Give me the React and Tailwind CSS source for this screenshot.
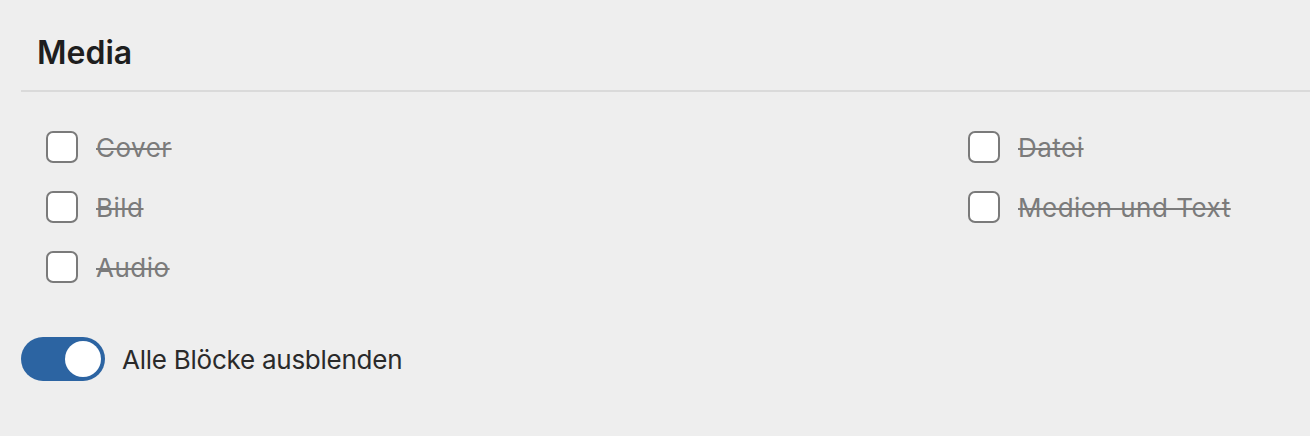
import React from "react";

const leftItems = ["Cover", "Bild", "Audio"];
const rightItems = ["Datei", "Medien und Text"];

const BlockCheckbox = ({ label }) => (
  <label className="flex items-center h-[60px]">
    <span className="w-[32px] h-[32px] rounded-[7px] border-2 border-[#7a7a7a] bg-white shrink-0" />
    <span className="ml-[18px] text-[26px] tracking-[0.5px] text-[#7b7b7b] line-through decoration-[2px]">
      {label}
    </span>
  </label>
);

const App = () => {
  return (
    <div
      className="min-h-[436px] bg-[#eeeeee] pl-[21px]"
      style={{ fontFamily: "Inter, 'Noto Sans', sans-serif" }}
    >
      {/* Header */}
      <h2 className="pl-[16px] pt-[33px] text-[32px] leading-[40px] font-semibold text-[#1e1e1e] h-[90px]">
        Media
      </h2>
      <div className="h-[2px] bg-[#dadada]" />

      {/* Block list */}
      <div className="grid grid-cols-[922px_1fr] pl-[25px] pt-[25px]">
        <div>
          {leftItems.map((item) => (
            <BlockCheckbox key={item} label={item} />
          ))}
        </div>
        <div>
          {rightItems.map((item) => (
            <BlockCheckbox key={item} label={item} />
          ))}
        </div>
      </div>

      {/* Toggle */}
      <div className="flex items-center mt-[40px]">
        <div className="w-[84px] h-[44px] rounded-full bg-[#2c64a2] flex items-center justify-end pr-[4px]">
          <div className="w-[36px] h-[36px] rounded-full bg-white" />
        </div>
        <span className="ml-[17px] text-[26px] tracking-[-0.25px] text-[#2a2a2a]">
          Alle Blöcke ausblenden
        </span>
      </div>
    </div>
  );
};

export default App;
